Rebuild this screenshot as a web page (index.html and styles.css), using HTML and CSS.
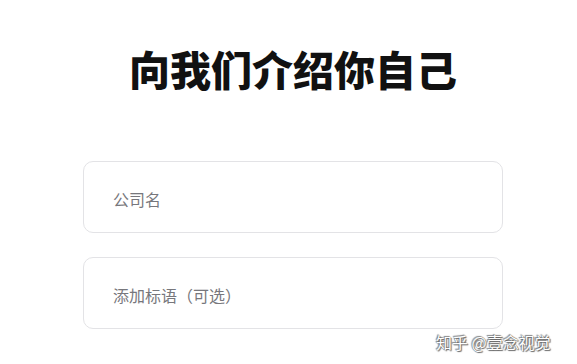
FILE: index.html
```html
<!DOCTYPE html>
<html lang="zh">
<head>
<meta charset="utf-8">
<link rel="stylesheet" href="styles.css">
</head>
<body>
<main class="page">
  <h1 class="title">向我们介绍你自己</h1>
  <form class="form">
    <div class="field"><span class="placeholder">公司名</span></div>
    <div class="field"><span class="placeholder">添加标语（可选）</span></div>
  </form>
</main>
<div class="watermark">知乎 @壹念视觉</div>
</body>
</html>
```

FILE: styles.css
```css
html, body {
  margin: 0;
  padding: 0;
  background: #ffffff;
}
body {
  width: 577px;
  height: 364px;
  overflow: hidden;
  position: relative;
  font-family: "Noto Sans CJK SC", "Noto Sans", sans-serif;
}
.page {
  margin-left: 83px;
  width: 420px;
  padding-top: 43px;
}
.title {
  margin: 0;
  text-align: center;
  font-size: 41px;
  line-height: 50px;
  font-weight: 900;
  color: #111111;
  letter-spacing: 0;
}
.form {
  margin-top: 68px;
  display: flex;
  flex-direction: column;
  gap: 24px;
}
.field {
  box-sizing: border-box;
  height: 72px;
  border: 1px solid #e3e3e6;
  border-radius: 10px;
  padding: 4px 0 0 29px;
  display: flex;
  align-items: center;
}
.placeholder {
  font-size: 16px;
  color: #77777c;
}
.watermark {
  position: absolute;
  left: 436px;
  top: 331px;
  font-size: 16px;
  line-height: 22px;
  color: #ffffff;
  text-shadow: 0 0 1px #555, 1px 1px 1px #666, -1px -1px 1px #888;
  letter-spacing: 0;
}
```
